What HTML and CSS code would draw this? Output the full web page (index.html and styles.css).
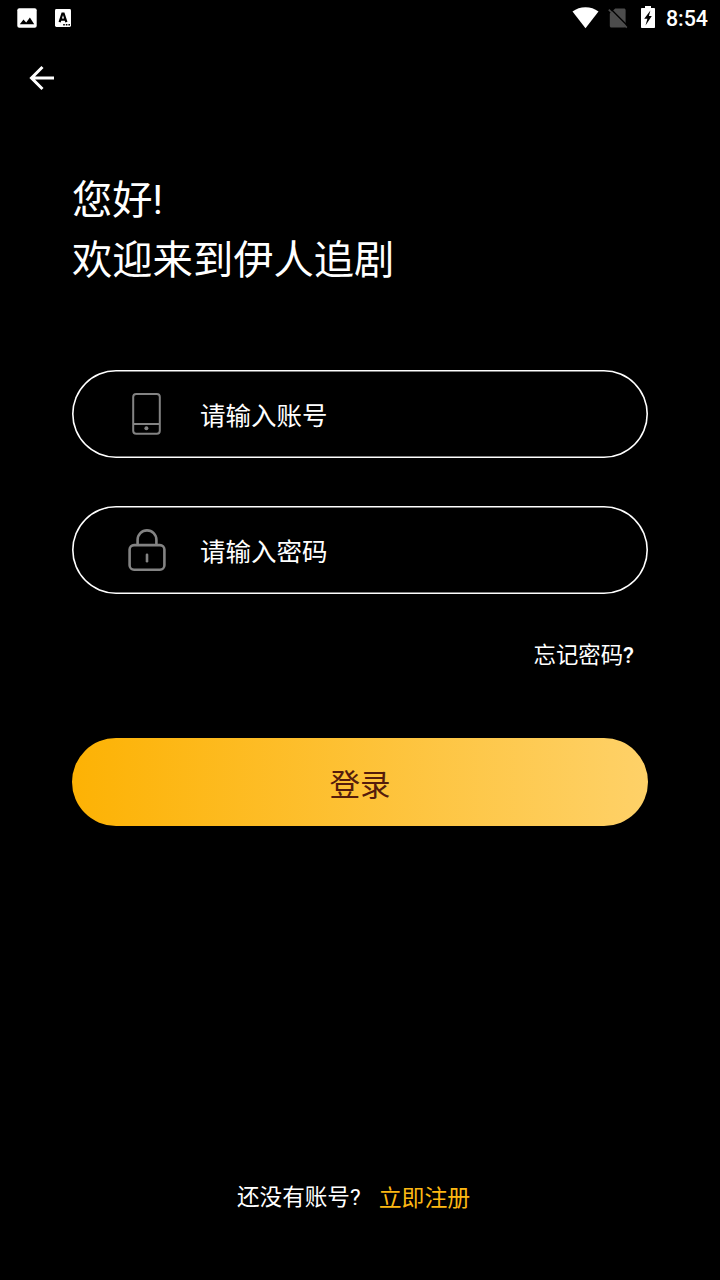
FILE: index.html
```html
<!DOCTYPE html>
<html lang="zh-CN">

<head>
    <meta charset="UTF-8">
    <meta name="viewport" content="width=device-width, initial-scale=1.0">
    <title>登录</title>
    <link rel="stylesheet" href="styles.css">
</head>

<body>
    <div class="status-bar">
        <div class="status-left">
            <svg class="icon-image" width="20" height="20" viewBox="0 0 20 20">
                <rect x=".3" y=".3" width="19.4" height="19.4" rx="2" fill="#fff"/>
                <path d="M2.8 16.2l3.7-4.8 2.7 3 3.7-4.9 4.3 6.7z" fill="#000"/>
            </svg>
            <svg class="icon-lang" width="16" height="18" viewBox="0 0 16 18">
                <rect width="16" height="18" rx="1.4" fill="#fff"/>
                <path d="M4.6 13.1L7.4 4.5h1.2l2.8 8.6M6 10.6h4" fill="none" stroke="#000" stroke-width="2.2"/>
                <path d="M8.2 15h1.6v1.6H8.2zM10.8 15h1.6v1.6h-1.6zM13.4 15H15v1.6h-1.6z" fill="#000"/>
            </svg>
        </div>
        <div class="status-right">
            <svg class="icon-wifi" width="27" height="22" viewBox="0 0 27 22">
                <path d="M13.5 21.2L.5 4.6C4.2 1.8 8.6.3 13.5.3s9.3 1.5 13 4.3z" fill="#fff"/>
            </svg>
            <svg class="icon-sim" width="20" height="21" viewBox="0 0 20 21">
                <path d="M7.2.5H16c.9 0 1.6.7 1.6 1.6V18c0 .9-.7 1.5-1.6 1.5H3.4c-.9 0-1.6-.6-1.6-1.5V5.5z" fill="#4c4c4c"/>
                <path d="M2.3.5l17.7 17.7" stroke="#000" stroke-width="1.4"/>
                <path d="M.8 1.7l18 18" stroke="#4c4c4c" stroke-width="1.7"/>
            </svg>
            <svg class="icon-battery" width="14" height="22" viewBox="0 0 14 22">
                <path d="M4 0h6v2h3.2c.5 0 .8.3.8.8v18.4c0 .5-.3.8-.8.8H.8c-.5 0-.8-.3-.8-.8V2.8c0-.5.3-.8.8-.8H4z" fill="#fff"/>
                <path d="M9.400 4.600L3.200 12.800h3.200L4.500 19.400l6.300-9.400H7.900z" fill="#000"/>
            </svg>
            <span class="clock">8:54</span>
        </div>
    </div>

    <div class="nav">
        <svg class="icon-back" width="26" height="26" viewBox="0 0 26 26">
            <path d="M25 13H3M13.5 2L2.5 13l11 11" fill="none" stroke="#fff" stroke-width="3"/>
        </svg>
    </div>

    <div class="login">
        <h1 class="welcome">您好!<br>欢迎来到伊人追剧</h1>

        <div class="field">
            <svg class="icon-field" width="40" height="44" viewBox="0 0 40 44">
                <g fill="none" stroke="#838383" stroke-width="2">
                    <rect x="6.2" y="2.1" width="26.6" height="39.6" rx="3"/>
                    <path d="M6 32h27"/>
                </g>
                <circle cx="19.4" cy="36.3" r="2" fill="#838383"/>
            </svg>
            <input class="field-input" type="text" placeholder="请输入账号">
        </div>

        <div class="field">
            <svg class="icon-field" width="40" height="44" viewBox="0 0 40 44">
                <g fill="none" stroke="#838383" stroke-width="2.6">
                    <rect x="2.6" y="17.1" width="34.8" height="24.6" rx="4.5"/>
                    <path d="M10.6 17v-5.2a9.4 9.4 0 0 1 18.8 0V17"/>
                    <path d="M20 26.8v6.4" stroke-linecap="round"/>
                </g>
            </svg>
            <input class="field-input" type="password" placeholder="请输入密码">
        </div>

        <a class="forgot">忘记密码<span class="mark">?</span></a>
        <button class="submit">登录</button>
    </div>

    <div class="register">
        <span>还没有账号?</span>
        <a class="register-link">立即注册</a>
    </div>
</body>

</html>
```

FILE: styles.css
```css
* {
    box-sizing: border-box;
}

body {
    display: flex;
    flex-direction: column;
    height: 1280px;
    margin: 0;
    background-color: #000;
    color: #fff;
    font-family: Roboto, "Noto Sans CJK SC", sans-serif;
    overflow: hidden;
}

svg {
    display: block;
    flex: none;
}

/* Status bar */
.status-bar {
    display: flex;
    justify-content: space-between;
    height: 36px;
    padding: 0 12px 0 17px;
}

.status-left,
.status-right {
    display: flex;
    align-items: center;
}

.status-left {
    gap: 18px;
}

.icon-wifi {
    margin-right: 9px;
}

.icon-sim {
    margin-right: 13px;
}

.icon-battery {
    margin: -2px 11px 0 0;
}

.clock {
    padding-top: 2px;
    font-size: 21.4px;
    font-weight: 500;
    line-height: 24px;
}

/* Back arrow */
.nav {
    height: 84px;
    padding: 29px 29px 0;
}

/* Login form */
.login {
    display: flex;
    flex-direction: column;
    padding: 51px 72px 0;
}

.welcome {
    margin: 0 0 79px;
    font-size: 40.3px;
    font-weight: 400;
    line-height: 60px;
}

.field {
    display: flex;
    align-items: center;
    height: 88px;
    margin-bottom: 48px;
    padding-left: 55px;
    border-radius: 44px;
    box-shadow: inset 0 0 0 1.6px #fff;
}

.field-input {
    width: 400px;
    height: 60px;
    margin-left: 33px;
    padding: 4px 0 0;
    border: none;
    outline: none;
    background: none;
    color: #fff;
    font-family: inherit;
    font-size: 25.5px;
}

.field-input::placeholder {
    color: #fff;
    opacity: 1;
}

.forgot {
    align-self: flex-end;
    margin: -2px 14px 0 0;
    font-size: 22.4px;
    line-height: 30px;
}

.mark {
    font-weight: 500;
}

.submit {
    height: 88px;
    margin-top: 68px;
    padding: 2px 0 0;
    border: none;
    border-radius: 44px;
    background: linear-gradient(to right, #fdb204, #fed168);
    color: #551c0c;
    font-family: inherit;
    font-size: 30.5px;
}

/* Register line */
.register {
    display: flex;
    gap: 18px;
    margin: auto 0 65px;
    padding-left: 237px;
    font-size: 22.6px;
    line-height: 32px;
}

.register-link {
    padding-top: 1px;
    color: #fdb813;
    font-size: 22.9px;
}
```
